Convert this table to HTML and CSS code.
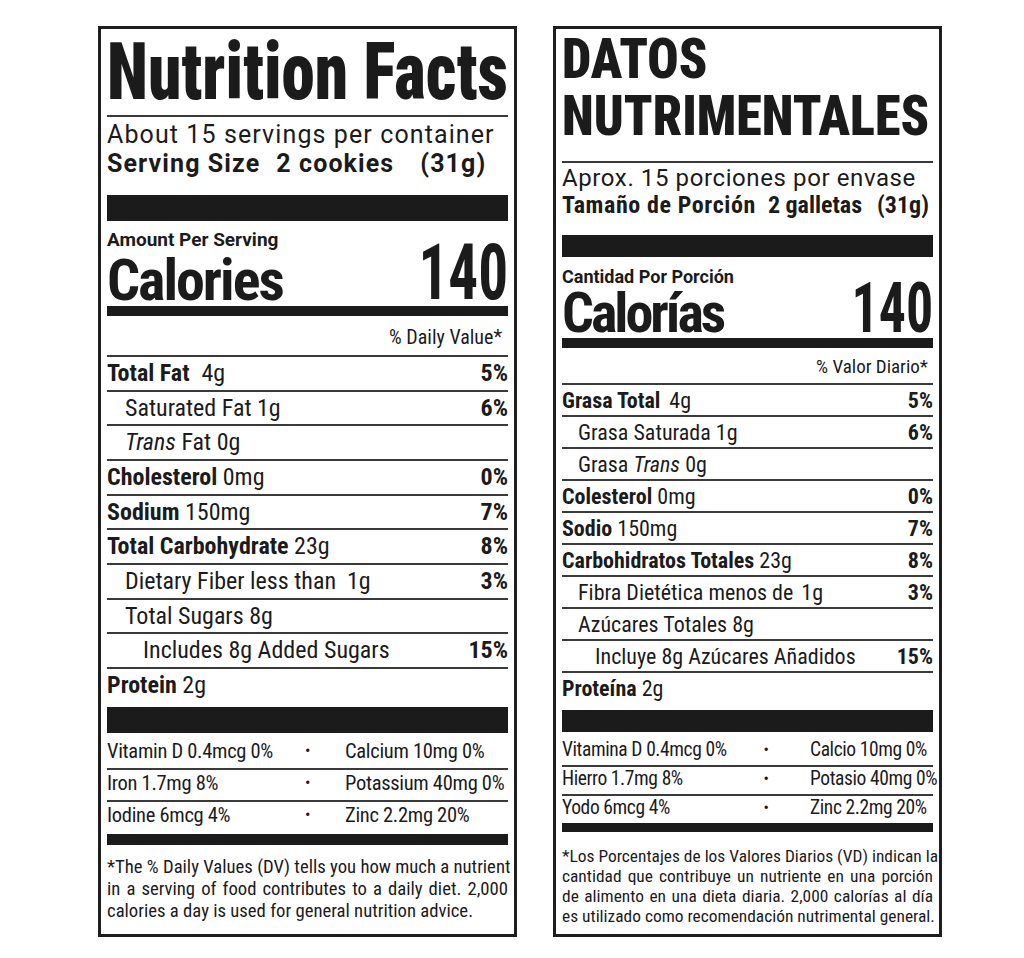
FILE: index.html
```html
<!DOCTYPE html>
<html lang="en">
<head>
<meta charset="utf-8">
<title>Nutrition Facts / Datos Nutrimentales</title>
<link rel="stylesheet" href="styles.css">
</head>
<body>
<main class="labels">
  <section class="label en">
    <h1 class="title"><span class="tt">Nutrition Facts</span></h1>
    <div class="serving">
      <div class="servings">About 15 servings per container</div>
      <div class="size"><span class="s1">Serving Size</span><span class="s2">2 cookies</span><span class="s3">(31g)</span></div>
    </div>
    <div class="bar thick"></div>
    <div class="cal">
      <div class="cal-left">
        <div class="amount">Amount Per Serving</div>
        <div class="cal-label">Calories</div>
      </div>
      <div class="cal-num">140</div>
    </div>
    <div class="bar med"></div>
    <div class="dv-head">% Daily Value*</div>
    <div class="rows">
      <div class="row"><span><b>Total Fat</b><span class="gap">4g</span></span><b>5%</b></div>
      <div class="row i1"><span>Saturated Fat 1g</span><b>6%</b></div>
      <div class="row i1"><span><i>Trans</i> Fat 0g</span></div>
      <div class="row"><span><b>Cholesterol</b> 0mg</span><b>0%</b></div>
      <div class="row"><span><b>Sodium</b> 150mg</span><b>7%</b></div>
      <div class="row"><span><b>Total Carbohydrate</b> 23g</span><b>8%</b></div>
      <div class="row i1"><span>Dietary Fiber less than<span class="gap2">1g</span></span><b>3%</b></div>
      <div class="row i1"><span>Total Sugars 8g</span></div>
      <div class="row i2"><span>Includes 8g Added Sugars</span><b>15%</b></div>
      <div class="row last"><span><b>Protein</b> 2g</span></div>
    </div>
    <div class="bar thick"></div>
    <div class="vits">
      <div class="vrow"><span>Vitamin D 0.4mcg 0%</span><span class="dot">•</span><span class="v2">Calcium 10mg 0%</span></div>
      <div class="vrow"><span>Iron 1.7mg 8%</span><span class="dot">•</span><span class="v2">Potassium 40mg 0%</span></div>
      <div class="vrow"><span>Iodine 6mcg 4%</span><span class="dot">•</span><span class="v2">Zinc 2.2mg 20%</span></div>
    </div>
    <div class="bar thin"></div>
    <p class="foot">
      <span class="fl">*The % Daily Values (DV) tells you how much a nutrient</span>
      <span class="fl">in a serving of food contributes to a daily diet. 2,000</span>
      <span class="fl last">calories a day is used for general nutrition advice.</span>
    </p>
  </section>

  <section class="label es">
    <h1 class="title"><span class="tt">DATOS<br>NUTRIMENTALES</span></h1>
    <div class="serving">
      <div class="servings">Aprox. 15 porciones por envase</div>
      <div class="size"><span class="s1">Tamaño de Porción</span><span class="s2">2 galletas</span><span class="s3">(31g)</span></div>
    </div>
    <div class="bar thick"></div>
    <div class="cal">
      <div class="cal-left">
        <div class="amount">Cantidad Por Porción</div>
        <div class="cal-label">Calorías</div>
      </div>
      <div class="cal-num">140</div>
    </div>
    <div class="bar med"></div>
    <div class="dv-head">% Valor Diario*</div>
    <div class="rows">
      <div class="row"><span><b>Grasa Total</b><span class="gap">4g</span></span><b>5%</b></div>
      <div class="row i1"><span>Grasa Saturada 1g</span><b>6%</b></div>
      <div class="row i1"><span>Grasa <i>Trans</i> 0g</span></div>
      <div class="row"><span><b>Colesterol</b> 0mg</span><b>0%</b></div>
      <div class="row"><span><b>Sodio</b> 150mg</span><b>7%</b></div>
      <div class="row"><span><b>Carbohidratos Totales</b> 23g</span><b>8%</b></div>
      <div class="row i1"><span>Fibra Dietética menos de<span class="gap2">1g</span></span><b>3%</b></div>
      <div class="row i1"><span>Azúcares Totales 8g</span></div>
      <div class="row i2"><span>Incluye 8g Azúcares Añadidos</span><b>15%</b></div>
      <div class="row last"><span><b>Proteína</b> 2g</span></div>
    </div>
    <div class="bar thick"></div>
    <div class="vits">
      <div class="vrow"><span>Vitamina D 0.4mcg 0%</span><span class="dot">•</span><span class="v2">Calcio 10mg 0%</span></div>
      <div class="vrow"><span>Hierro 1.7mg 8%</span><span class="dot">•</span><span class="v2">Potasio 40mg 0%</span></div>
      <div class="vrow"><span>Yodo 6mcg 4%</span><span class="dot">•</span><span class="v2">Zinc 2.2mg 20%</span></div>
    </div>
    <div class="bar thin"></div>
    <p class="foot">
      <span class="fl">*Los Porcentajes de los Valores Diarios (VD) indican la</span>
      <span class="fl">cantidad que contribuye un nutriente en una porción</span>
      <span class="fl">de alimento en una dieta diaria. 2,000 calorías al día</span>
      <span class="fl last">es utilizado como recomendación nutrimental general.</span>
    </p>
  </section>
</main>
</body>
</html>
```
FILE: styles.css
```css
html, body {
  margin: 0;
  padding: 0;
  background: #ffffff;
}

body {
  font-family: "Roboto Condensed", Roboto, sans-serif;
  color: #1b1b1b;
}

.labels {
  display: flex;
  align-items: flex-start;
  gap: 36px;
  padding: 26px 0 0 98px;
}

.label {
  box-sizing: border-box;
  height: 911px;
  border: 3px solid #1e1e1e;
  padding: 0 6px;
  display: flex;
  flex-direction: column;
  overflow: hidden;
}

.label.en { width: 419px; }
.label.es { width: 389px; }

/* ---------- title ---------- */
.title {
  margin: 0;
  font-weight: 900;
  border-bottom: 2px solid #3a3a3a;
}

.title .tt {
  display: block;
  white-space: nowrap;
  transform-origin: 0 50%;
}

.en .title {
  font-size: 80px;
  line-height: 80px;
  padding: 3px 0 3px;
}
.en .title .tt { transform: scaleX(0.84); }

.es .title {
  font-size: 56px;
  line-height: 57px;
  padding: 2px 0 16px;
}
.es .title .tt { transform: scaleX(0.93); }

/* ---------- serving ---------- */
.serving { white-space: nowrap; }
.servings { font-weight: 400; }
.size { font-weight: 700; }

.en .serving { padding: 3px 0 17px; }
.en .servings {
  font-family: Roboto, sans-serif;
  font-size: 25px;
  line-height: 29px;
  letter-spacing: 1.1px;
}
.en .size {
  font-family: Roboto, sans-serif;
  font-size: 25px;
  line-height: 29px;
  letter-spacing: 1.1px;
}
.en .size .s2 { margin-left: 16px; }
.en .size .s3 { margin-left: 26px; }

.es .serving { padding: 2px 0 16px; }
.es .servings {
  font-family: Roboto, sans-serif;
  font-size: 24px;
  line-height: 27px;
  letter-spacing: 0.6px;
}
.es .size { font-size: 24px; line-height: 27px; }
.es .size .s1 { letter-spacing: 0.6px; }
.es .size .s2 { margin-left: 12px; }
.es .size .s3 { margin-left: 15px; }

/* ---------- bars ---------- */
.bar { background: #1b1b1b; flex: none; }
.en .bar.thick { height: 26px; }
.es .bar.thick { height: 22px; }
.bar.med { height: 10px; }
.en .bar.thin { height: 11px; }
.es .bar.thin { height: 9px; }

/* ---------- calories ---------- */
.cal {
  display: flex;
  justify-content: space-between;
  align-items: flex-end;
}

.amount {
  font-family: Roboto, sans-serif;
  font-weight: 700;
}
.cal-label { font-weight: 700; }
.cal-num {
  font-weight: 700;
  transform-origin: 100% 50%;
}

.en .cal { padding-top: 9px; }
.en .amount { font-size: 19px; line-height: 20px; }
.en .cal-label { font-size: 58px; line-height: 52px; margin-top: 4px; letter-spacing: -2px; }
.en .cal-num { font-size: 78px; line-height: 66px; transform: scaleX(0.76); }

.es .cal { padding-top: 9.5px; }
.es .amount { font-size: 18px; line-height: 20px; }
.es .cal-label { font-size: 56px; line-height: 50px; margin-top: 1px; letter-spacing: -3px; }
.es .cal-num { font-size: 70px; line-height: 59px; transform: scaleX(0.77); }

/* ---------- daily value header ---------- */
.dv-head {
  text-align: right;
  border-bottom: 2px solid #3a3a3a;
}

.en .dv-head { font-size: 20px; line-height: 24px; padding: 9px 6px 6px 0; }
.es .dv-head { font-size: 19px; line-height: 22px; padding: 8.5px 5px 4.5px 0; }

/* ---------- nutrient rows ---------- */
.row {
  display: flex;
  justify-content: space-between;
  white-space: nowrap;
  border-bottom: 2px solid #3a3a3a;
}

.row b { font-weight: 700; }
.row i { font-style: italic; }
.row.last { border-bottom: none; }

.en .row { font-size: 24px; line-height: 32.67px; }
.en .row.i1 { padding-left: 18px; }
.en .row.i2 { padding-left: 36px; }
.en .row.last { padding-bottom: 5.3px; }
.en .gap { margin-left: 12px; }
.en .gap2 { margin-left: 11px; }

.es .row { font-size: 22px; line-height: 29.1px; padding-top: 1px; }
.es .row.i1 { padding-left: 16px; }
.es .row.i2 { padding-left: 33px; }
.es .row.last { padding-bottom: 6.4px; }
.es .gap { margin-left: 9px; }
.es .gap2 { margin-left: 8px; }

/* ---------- vitamins ---------- */
.vits { white-space: nowrap; }

.vrow {
  display: grid;
  border-bottom: 2px solid #3a3a3a;
}

.vrow:last-child { border-bottom: none; }
.dot { text-align: center; font-size: 16px; }

.en .vits { padding-top: 5px; }
.en .vrow {
  grid-template-columns: 194px 13px 1fr;
  font-size: 20.5px;
  letter-spacing: -0.3px;
  line-height: 26px;
  padding-bottom: 4px;
}
.en .vrow:last-child { padding-bottom: 6px; }
.en .v2 { padding-left: 31px; }

.es .vits { padding-top: 6px; }
.es .vrow {
  grid-template-columns: 199px 10px 1fr;
  font-size: 19.5px;
  letter-spacing: -0.4px;
  line-height: 24px;
  padding-bottom: 3px;
}
.es .v2 { padding-left: 39px; }

/* ---------- footnote ---------- */
.foot { margin: 0; }

.fl {
  display: block;
  white-space: nowrap;
  text-align: justify;
  text-align-last: justify;
}

.fl.last { text-align-last: left; }

.en .foot { font-size: 18.7px; line-height: 22px; padding-top: 10.5px; }
.es .foot { font-size: 17.4px; line-height: 20px; padding-top: 14.4px; }
```
